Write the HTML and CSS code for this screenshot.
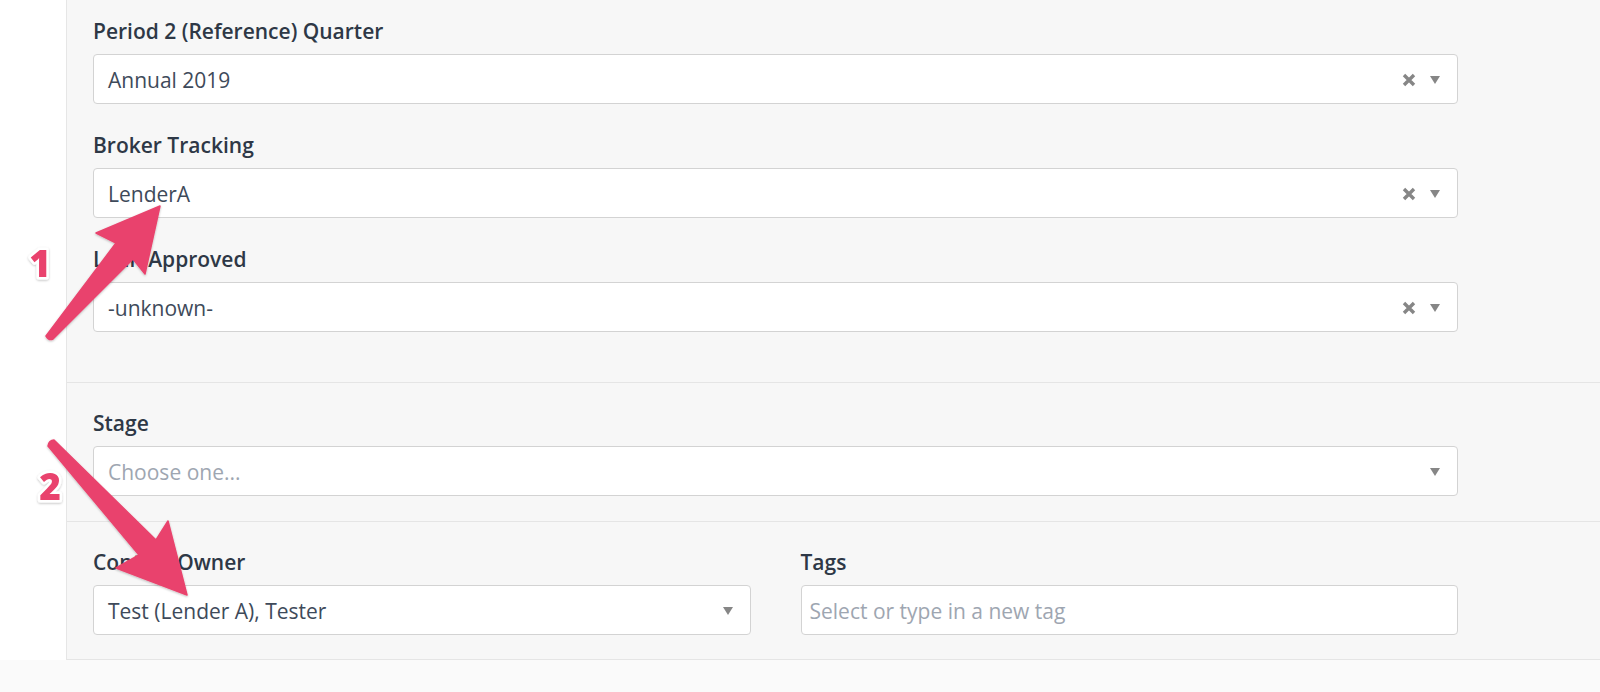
FILE: index.html
```html
<!DOCTYPE html>
<html lang="en">
<head>
<meta charset="utf-8">
<title>Deal fields</title>
<link rel="stylesheet" href="styles.css">
</head>
<body>
<div class="page">
  <aside class="rail"></aside>
  <main class="panel">
    <section class="group group-first">
      <div class="field">
        <label class="label">Period 2 (Reference) Quarter</label>
        <div class="select">
          <span class="value">Annual 2019</span>
          <span class="controls">
            <svg class="clear" viewBox="0 0 14 14"><path d="M2 2 L12 12 M12 2 L2 12"/></svg>
            <svg class="caret" viewBox="0 0 10 8"><polygon points="0,0 10,0 5,8"/></svg>
          </span>
        </div>
      </div>
      <div class="field">
        <label class="label">Broker Tracking</label>
        <div class="select">
          <span class="value">LenderA</span>
          <span class="controls">
            <svg class="clear" viewBox="0 0 14 14"><path d="M2 2 L12 12 M12 2 L2 12"/></svg>
            <svg class="caret" viewBox="0 0 10 8"><polygon points="0,0 10,0 5,8"/></svg>
          </span>
        </div>
      </div>
      <div class="field">
        <label class="label">Loan Approved</label>
        <div class="select">
          <span class="value">-unknown-</span>
          <span class="controls">
            <svg class="clear" viewBox="0 0 14 14"><path d="M2 2 L12 12 M12 2 L2 12"/></svg>
            <svg class="caret" viewBox="0 0 10 8"><polygon points="0,0 10,0 5,8"/></svg>
          </span>
        </div>
      </div>
    </section>
    <section class="group">
      <div class="field">
        <label class="label">Stage</label>
        <div class="select">
          <span class="value placeholder">Choose one...</span>
          <span class="controls">
            <svg class="caret" viewBox="0 0 10 8"><polygon points="0,0 10,0 5,8"/></svg>
          </span>
        </div>
      </div>
    </section>
    <section class="group group-cols">
      <div class="field">
        <label class="label">Contact Owner</label>
        <div class="select">
          <span class="value">Test (Lender A), Tester</span>
          <span class="controls">
            <svg class="caret" viewBox="0 0 10 8"><polygon points="0,0 10,0 5,8"/></svg>
          </span>
        </div>
      </div>
      <div class="field">
        <label class="label">Tags</label>
        <div class="select tags">
          <span class="value placeholder">Select or type in a new tag</span>
        </div>
      </div>
    </section>
  </main>
</div>
<div class="footer"></div>

<svg class="annot" width="1600" height="692" viewBox="0 0 1600 692">
  <defs>
    <filter id="sh" x="-20%" y="-20%" width="140%" height="140%">
      <feDropShadow dx="0" dy="1" stdDeviation="1.2" flood-color="#000" flood-opacity="0.25"/>
    </filter>
  </defs>
  <g class="arrow" filter="url(#sh)">
    <path d="M160 206 L145 274 L133 259 L53 339 Q49 341 46 336 L116 243 L96 233 Z"/>
    <path d="M187 595 L168 521 L156 540 L54 440 Q49 440 48 446 L139 555 L116 568 Z"/>
  </g>
  <g class="num" filter="url(#sh)">
    <text x="40" y="277">1</text>
    <text x="50" y="500">2</text>
  </g>
</svg>
</body>
</html>
```

FILE: styles.css
```css
* { box-sizing: border-box; }

html, body {
  margin: 0;
  padding: 0;
}

body {
  width: 1600px;
  height: 692px;
  overflow: hidden;
  background: #fafafa;
  font-family: "Open Sans", "Noto Sans", sans-serif;
  position: relative;
}

.page {
  display: flex;
  align-items: stretch;
}

.rail {
  width: 67px;
  flex: none;
  background: #ffffff;
  border-right: 1px solid #e6e6e6;
}

.panel {
  flex: 1;
  background: #f7f7f7;
}

.group {
  padding: 28px 142px 25px 26px;
  border-bottom: 1px solid #e5e5e5;
  display: flex;
  flex-direction: column;
  gap: 29px;
}

.group-first {
  padding-top: 19px;
  padding-bottom: 50px;
}

.group-cols {
  flex-direction: row;
  gap: 50px;
  padding-bottom: 24px;
}

.group-cols .field {
  flex: 1;
}

.field {
  display: flex;
  flex-direction: column;
  gap: 11px;
}

.label {
  display: block;
  font-size: 21px;
  line-height: 24px;
  font-weight: 600;
  color: #2e3846;
}

.select {
  height: 50px;
  background: #ffffff;
  border: 1px solid #d3d3d3;
  border-radius: 4px;
  display: flex;
  align-items: center;
  padding: 2px 17px 0 14px;
}

.select.tags {
  padding-left: 8px;
}

.value {
  flex: 1;
  font-size: 21px;
  line-height: 28px;
  color: #3e4a5a;
  white-space: nowrap;
}

.value.placeholder {
  color: #9ea6b1;
}

.controls {
  display: flex;
  align-items: center;
  gap: 14px;
}

.clear {
  width: 14px;
  height: 14px;
  stroke: #868686;
  stroke-width: 3.4;
  fill: none;
}

.caret {
  width: 10px;
  height: 8px;
  fill: #868686;
}

.footer {
  height: 31px;
  background: #fafafa;
}

.annot {
  position: absolute;
  left: 0;
  top: 0;
  pointer-events: none;
}

.arrow path {
  fill: #e9436d;
  stroke: #e9436d;
  stroke-width: 1.5;
  stroke-linejoin: round;
}

.num text {
  font-family: "Open Sans", "Noto Sans", sans-serif;
  font-weight: 800;
  font-size: 37px;
  text-anchor: middle;
  fill: #e9436d;
  stroke: #ffffff;
  stroke-width: 5px;
  stroke-linejoin: round;
  paint-order: stroke fill;
}
```
